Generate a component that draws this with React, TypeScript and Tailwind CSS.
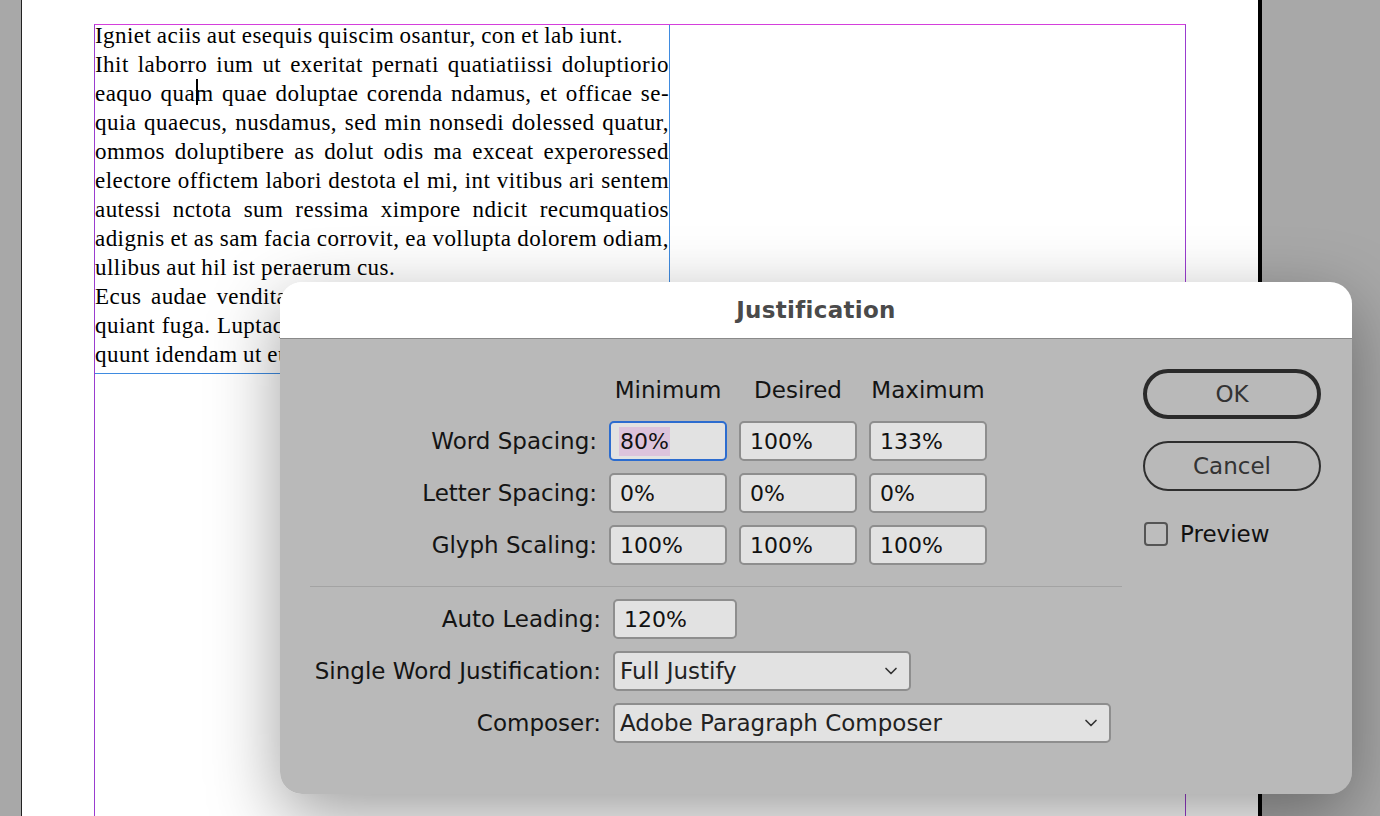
import { ChevronDown } from 'lucide-react';

const lines: { text: string; last?: boolean }[] = [
  { text: 'Igniet aciis aut esequis quiscim osantur, con et lab iunt.', last: true },
  { text: 'Ihit laborro ium ut exeritat pernati quatiatiissi doluptiorio' },
  { text: 'eaquo quam quae doluptae corenda ndamus, et officae se-' },
  { text: 'quia quaecus, nusdamus, sed min nonsedi dolessed quatur,' },
  { text: 'ommos doluptibere as dolut odis ma exceat experoressed' },
  { text: 'electore offictem labori destota el mi, int vitibus ari sentem' },
  { text: 'autessi nctota sum ressima ximpore ndicit recumquatios' },
  { text: 'adignis et as sam facia corrovit, ea vollupta dolorem odiam,' },
  { text: 'ullibus aut hil ist peraerum cus.', last: true },
  { text: 'Ecus audae venditatur sitatur mos explabor arum rest aut' },
  { text: 'quiant fuga. Luptaquas mo volorum fuga nos dolorum quae' },
  { text: 'quunt idendam ut eum aut que nonsequam rem etur mint.', last: true },
];

const ui = "font-['DejaVu_Sans',sans-serif]";

function Field({ value, focused, w = 'w-[118px]' }: { value: string; focused?: boolean; w?: string }) {
  return (
    <div
      className={`${w} h-[40px] rounded-[5px] bg-[#e2e2e2] flex items-center pl-[8px] text-[22px] text-[#111] ${
        focused ? 'border-2 border-[#2c6ccf]' : 'border-2 border-[#8e8e8e]'
      }`}
    >
      {focused ? <span className="bg-[#dcc3dc] px-[1px] leading-[29px]">{value}</span> : <span className="pl-[1px]">{value}</span>}
    </div>
  );
}

function Select({ value, w }: { value: string; w: string }) {
  return (
    <div className={`${w} h-[40px] rounded-[5px] bg-[#e2e2e2] border-2 border-[#8e8e8e] flex items-center justify-between pl-[5px] pr-[8px] text-[23px] text-[#222]`}>
      <span>{value}</span>
      <ChevronDown size={20} strokeWidth={2} className="text-[#333]" />
    </div>
  );
}

export default function App() {
  return (
    <div className="relative w-[1380px] h-[816px] overflow-hidden bg-[#a8a8a8] flex">
      <div className="w-[21px] shrink-0" />
      {/* page */}
      <div className="w-[1241px] h-full bg-white border-l border-[#222] border-r-4 border-r-black pl-[72px] pt-[24px]">
        <div className="w-[1092px] h-[900px] border-t border-t-[#d43fdc] border-x border-x-[#9a3ccf]">
          <div className="relative flex flex-col w-[575px] h-[349px] border-r border-b border-[#3f8be0] font-['Liberation_Serif',serif] text-[23px] tracking-[0.45px] leading-[29px] text-black">
            <div className="-mt-[4px]">
              {lines.map((l, i) => (
                <div key={i} className={`flex ${l.last ? 'gap-[5.5px]' : 'justify-between'}`}>
                  {l.text.split(' ').map((w, j) => (
                    <span key={j}>{w}</span>
                  ))}
                </div>
              ))}
            </div>
            <div className="absolute left-[101px] top-[54px] w-[2px] h-[26px] bg-black" />
          </div>
        </div>
      </div>

      {/* dialog */}
      <div className={`absolute left-[280px] top-[282px] w-[1072px] h-[512px] rounded-[22px] overflow-hidden flex flex-col shadow-[0_22px_70px_rgba(0,0,0,0.38)] ${ui}`}>
        <div className="h-[57px] shrink-0 bg-white border-b border-[#8a8a8a] flex items-center justify-center">
          <span className="font-bold text-[23px] text-[#4a4a4a] tracking-[0.3px]">Justification</span>
        </div>
        <div className="flex-1 bg-[#b9b9b9] flex pl-[30px]">
          <div className="w-[812px] pt-[35px]">
            <div className="grid grid-cols-[287px_118px_118px_118px] gap-x-[12px] gap-y-[12px] items-center text-[23px] text-[#141414]">
              <div />
              <div className="text-center h-[32px] mb-[3px] leading-[32px]">Minimum</div>
              <div className="text-center h-[32px] mb-[3px] leading-[32px]">Desired</div>
              <div className="text-center h-[32px] mb-[3px] leading-[32px]">Maximum</div>

              <div className="text-right">Word Spacing:</div>
              <Field value="80%" focused />
              <Field value="100%" />
              <Field value="133%" />

              <div className="text-right">Letter Spacing:</div>
              <Field value="0%" />
              <Field value="0%" />
              <Field value="0%" />

              <div className="text-right">Glyph Scaling:</div>
              <Field value="100%" />
              <Field value="100%" />
              <Field value="100%" />
            </div>

            <div className="mt-[21px] h-px bg-[#a3a3a3]" />

            <div className="mt-[12px] grid grid-cols-[291px_auto] gap-x-[12px] gap-y-[12px] items-center text-[23px] text-[#141414]">
              <div className="text-right">Auto Leading:</div>
              <Field value="120%" w="w-[124px]" />

              <div className="text-right">Single Word Justification:</div>
              <Select value="Full Justify" w="w-[298px]" />

              <div className="text-right">Composer:</div>
              <Select value="Adobe Paragraph Composer" w="w-[498px]" />
            </div>
          </div>

          <div className="ml-[21px] pt-[30px] flex flex-col">
            <button className="w-[178px] h-[50px] rounded-full border-4 border-[#2a2a2a] text-[23px] text-[#333] flex items-center justify-center">
              OK
            </button>
            <button className="mt-[22px] w-[178px] h-[50px] rounded-full border-2 border-[#2e2e2e] text-[23px] text-[#333] flex items-center justify-center">
              Cancel
            </button>
            <div className="mt-[26px] flex items-center gap-[12px] pl-[1px]">
              <div className="w-[24px] h-[24px] rounded-[4px] border-2 border-[#555] bg-[#bdbdbd]" />
              <span className="text-[23px] text-[#111]">Preview</span>
            </div>
          </div>
        </div>
      </div>
    </div>
  );
}
